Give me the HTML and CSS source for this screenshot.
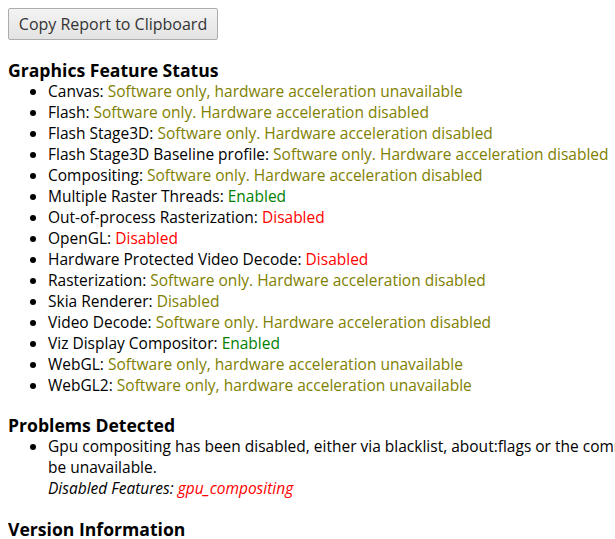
FILE: index.html
```html
<!DOCTYPE html>
<html lang="en">
<head>
  <meta charset="UTF-8">
  <title>GPU Internals</title>
  <link rel="stylesheet" href="styles.css">
</head>
<body>
  <button class="boton-copiar">Copy Report to Clipboard</button>

  <h3>Graphics Feature Status</h3>
  <ul class="lista-estado">
    <li>Canvas: <span class="amarillo">Software only, hardware acceleration unavailable</span></li>
    <li>Flash: <span class="amarillo">Software only. Hardware acceleration disabled</span></li>
    <li>Flash Stage3D: <span class="amarillo">Software only. Hardware acceleration disabled</span></li>
    <li>Flash Stage3D Baseline profile: <span class="amarillo">Software only. Hardware acceleration disabled</span></li>
    <li>Compositing: <span class="amarillo">Software only. Hardware acceleration disabled</span></li>
    <li>Multiple Raster Threads: <span class="verde">Enabled</span></li>
    <li>Out-of-process Rasterization: <span class="rojo">Disabled</span></li>
    <li>OpenGL: <span class="rojo">Disabled</span></li>
    <li>Hardware Protected Video Decode: <span class="rojo">Disabled</span></li>
    <li>Rasterization: <span class="amarillo">Software only. Hardware acceleration disabled</span></li>
    <li>Skia Renderer: <span class="amarillo">Disabled</span></li>
    <li>Video Decode: <span class="amarillo">Software only. Hardware acceleration disabled</span></li>
    <li>Viz Display Compositor: <span class="verde">Enabled</span></li>
    <li>WebGL: <span class="amarillo">Software only, hardware acceleration unavailable</span></li>
    <li>WebGL2: <span class="amarillo">Software only, hardware acceleration unavailable</span></li>
  </ul>

  <h3>Problems Detected</h3>
  <ul class="lista-estado">
    <li>Gpu compositing has been disabled, either via blacklist, about:flags or the command line. The browser will fall back to software compositing and hardware acceleration will<br>be unavailable.<br><i>Disabled Features: <span class="rojo">gpu_compositing</span></i></li>
  </ul>

  <h3>Version Information</h3>
</body>
</html>
```

FILE: styles.css
```css
/* Estilos de la pagina */
html {
  overflow: hidden;
}
body {
  width: 1500px;
  margin: 8px;
  font-family: "Open Sans", sans-serif;
  font-size: 15.5px;
  line-height: 21px;
  color: #000;
  background-color: #fff;
}
.boton-copiar {
  display: block;
  width: 210px;
  height: 32px;
  padding: 0 8px;
  font-family: inherit;
  font-size: 16px;
  color: #333;
  background: linear-gradient(#f3f3f3, #e3e3e3);
  border: 1px solid #adadad;
  border-radius: 2px;
}
h3 {
  font-size: 17.6px;
  line-height: 22px;
  margin: 18.7px 0 0;
}
.lista-estado {
  margin: 0;
  padding-left: 40px;
}
.amarillo {
  color: rgb(128, 128, 0);
}
.verde {
  color: rgb(0, 128, 0);
}
.rojo {
  color: rgb(255, 0, 0);
}
```
